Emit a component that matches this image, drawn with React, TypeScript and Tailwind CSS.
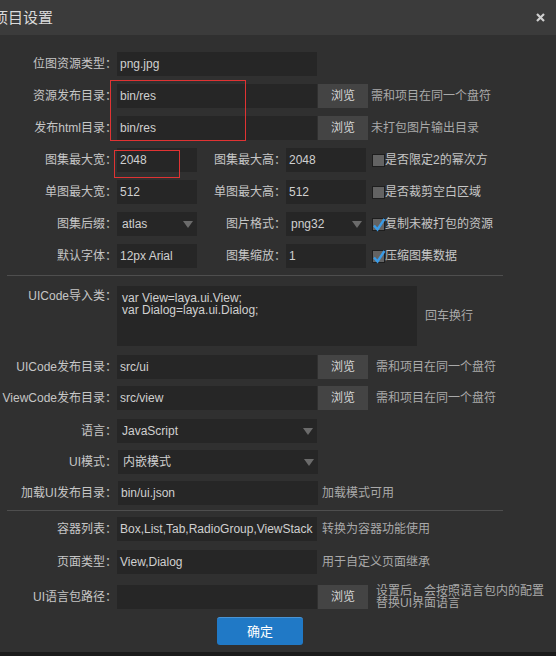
import React from 'react';

// Project settings dialog (dark theme)

const Field = ({ className, children }: { className: string; children?: React.ReactNode }) => (
  <div className={`${className} h-[24px] shrink-0 bg-[#262626] flex items-center pl-[3px] overflow-hidden whitespace-nowrap text-[#d0d0d0]`}>
    {children}
  </div>
);

const Select = ({ className, children }: { className: string; children: React.ReactNode }) => (
  <div className={`${className} h-[24px] shrink-0 bg-[#262626] flex items-center justify-between pl-[5px] pr-[4px] text-[#d0d0d0]`}>
    <span>{children}</span>
    <svg width="10" height="7" viewBox="0 0 10 7">
      <path d="M0 0 L10 0 L5 7 Z" fill="#6b6b6b" />
    </svg>
  </div>
);

const Browse = () => (
  <div className="w-[50px] h-[24px] ml-px shrink-0 bg-[#444444] flex items-center justify-center text-[#d6d6d6]">浏览</div>
);

const Label = ({ className, children }: { className: string; children: React.ReactNode }) => (
  <div className={`${className} shrink-0 text-right whitespace-nowrap text-[#c6c6c6]`}>{children}</div>
);

const Hint = ({ className, children }: { className: string; children: React.ReactNode }) => (
  <div className={`${className} whitespace-nowrap text-[#a9a9a9]`}>{children}</div>
);

const Check = ({ checked, children }: { checked?: boolean; children: React.ReactNode }) => (
  <div className="ml-[6px] flex items-center text-[#c6c6c6] whitespace-nowrap">
    <div className="relative w-[13px] h-[13px] bg-[#636363] border border-[#1e1e1e] shrink-0">
      {checked && (
        <svg className="absolute -left-px -top-[2px]" width="14" height="15" viewBox="0 0 14 15">
          <path d="M2 8.5 L5.5 12.5 L12.5 2" stroke="#3a9be6" strokeWidth="2.4" fill="none" />
        </svg>
      )}
    </div>
    <span>{children}</span>
  </div>
);

const Sep = ({ className }: { className: string }) => (
  <div className={`${className} ml-[7px] w-[496px] h-px bg-[#4e4e4e]`} />
);

export default function App() {
  return (
    <div className="relative w-[556px] h-[656px] overflow-hidden bg-[#303030] flex flex-col font-['Liberation_Sans','Noto_Sans_CJK_SC',sans-serif] text-[12px] leading-none">
      {/* Title bar */}
      <div className="h-[35px] shrink-0 bg-[#3b3b3b] flex items-center justify-between pr-[11px]">
        <span className="-ml-[7px] text-[15px] text-[#dadada]">项目设置</span>
        <svg width="9" height="9" viewBox="0 0 9 9">
          <path d="M1 1 L8 8 M8 1 L1 8" stroke="#cfcfcf" strokeWidth="2.2" />
        </svg>
      </div>

      <div className="flex-1 flex flex-col">
        <div className="mt-[17px] flex items-center">
          <Label className="w-[117px]">位图资源类型：</Label>
          <Field className="w-[200px]">png.jpg</Field>
        </div>
        <div className="mt-[8px] flex items-center">
          <Label className="w-[117px]">资源发布目录：</Label>
          <Field className="w-[200px]">bin/res</Field>
          <Browse />
          <Hint className="ml-[3px]">需和项目在同一个盘符</Hint>
        </div>
        <div className="mt-[8px] flex items-center">
          <Label className="w-[117px]">发布html目录：</Label>
          <Field className="w-[200px]">bin/res</Field>
          <Browse />
          <Hint className="ml-[3px]">未打包图片输出目录</Hint>
        </div>

        <div className="mt-[8px] flex items-center">
          <Label className="w-[117px]">图集最大宽：</Label>
          <Field className="w-[80px]">2048</Field>
          <Label className="w-[89px]">图集最大高：</Label>
          <Field className="w-[80px]">2048</Field>
          <Check>是否限定2的幂次方</Check>
        </div>
        <div className="mt-[8px] flex items-center">
          <Label className="w-[117px]">单图最大宽：</Label>
          <Field className="w-[80px]">512</Field>
          <Label className="w-[89px]">单图最大高：</Label>
          <Field className="w-[80px]">512</Field>
          <Check>是否裁剪空白区域</Check>
        </div>
        <div className="mt-[8px] flex items-center">
          <Label className="w-[117px]">图集后缀：</Label>
          <Select className="w-[80px]">atlas</Select>
          <Label className="w-[89px]">图片格式：</Label>
          <Select className="w-[80px]">png32</Select>
          <Check checked>复制未被打包的资源</Check>
        </div>
        <div className="mt-[8px] flex items-center">
          <Label className="w-[117px]">默认字体：</Label>
          <Field className="w-[80px]">12px Arial</Field>
          <Label className="w-[89px]">图集缩放：</Label>
          <Field className="w-[80px]">1</Field>
          <Check checked>压缩图集数据</Check>
        </div>

        <Sep className="mt-[7px]" />

        <div className="mt-[10px] flex items-center">
          <Label className="w-[117px] self-start pt-[4px]">UICode导入类：</Label>
          <div className="w-[300px] h-[60px] bg-[#262626] px-[5px] pt-[6px] text-[#d0d0d0] leading-[12px]">
            <div>var View=laya.ui.View;</div>
            <div>var Dialog=laya.ui.Dialog;</div>
          </div>
          <Hint className="ml-[8px]">回车换行</Hint>
        </div>
        <div className="mt-[9px] flex items-center">
          <Label className="w-[117px]">UICode发布目录：</Label>
          <Field className="w-[200px]">src/ui</Field>
          <Browse />
          <Hint className="ml-[8px]">需和项目在同一个盘符</Hint>
        </div>
        <div className="mt-[7px] flex items-center">
          <Label className="w-[117px]">ViewCode发布目录：</Label>
          <Field className="w-[200px]">src/view</Field>
          <Browse />
          <Hint className="ml-[8px]">需和项目在同一个盘符</Hint>
        </div>
        <div className="mt-[9px] flex items-center">
          <Label className="w-[117px]">语言：</Label>
          <Select className="w-[200px]">JavaScript</Select>
        </div>
        <div className="mt-[7px] flex items-center">
          <Label className="w-[117px]">UI模式：</Label>
          <Select className="w-[200px] ml-px">内嵌模式</Select>
        </div>
        <div className="mt-[7px] flex items-center">
          <Label className="w-[117px]">加载UI发布目录：</Label>
          <Field className="w-[200px] ml-px">bin/ui.json</Field>
          <Hint className="ml-[4px]">加载模式可用</Hint>
        </div>

        <Sep className="mt-[5px]" />

        <div className="mt-[6px] flex items-center">
          <Label className="w-[117px]">容器列表：</Label>
          <Field className="w-[200px]">Box,List,Tab,RadioGroup,ViewStack</Field>
          <Hint className="ml-[5px]">转换为容器功能使用</Hint>
        </div>
        <div className="mt-[9px] flex items-center">
          <Label className="w-[117px]">页面类型：</Label>
          <Field className="w-[200px]">View,Dialog</Field>
          <Hint className="ml-[5px]">用于自定义页面继承</Hint>
        </div>
        <div className="mt-[11px] flex items-center">
          <Label className="w-[117px]">UI语言包路径：</Label>
          <Field className="w-[200px]" />
          <Browse />
          <Hint className="ml-[8px] leading-[12px]">
            <div>设置后，会按照语言包内的配置</div>
            <div>替换UI界面语言</div>
          </Hint>
        </div>

        <div className="mt-[8px] flex">
          <button className="ml-[217px] w-[86px] h-[28px] rounded-[3px] bg-[#2079c6] border-t border-[#4a94d4] text-[13px] text-white">确定</button>
        </div>
      </div>

      <div className="h-[4px] shrink-0 bg-[#1b1b1b]" />

      {/* red annotation boxes */}
      <div className="absolute left-[110px] top-[80px] w-[136px] h-[61px] border border-[#e03333]" />
      <div className="absolute left-[114px] top-[150px] w-[66px] h-[28px] border border-[#e03333]" />
    </div>
  );
}
